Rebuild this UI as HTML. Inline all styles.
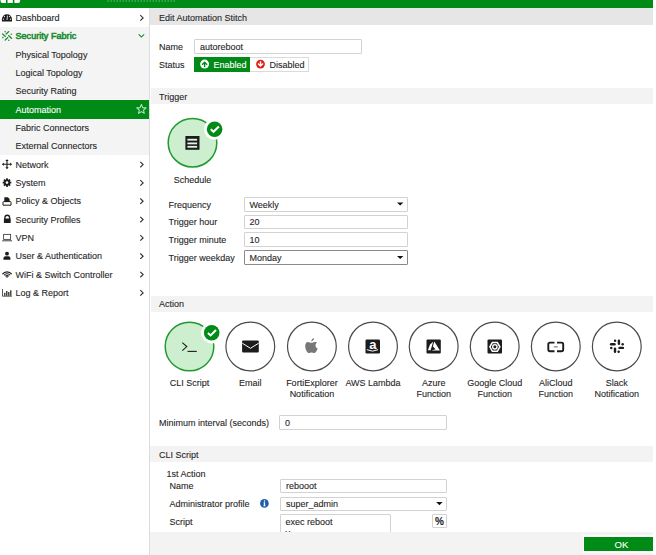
<!DOCTYPE html>
<html><head><meta charset="utf-8"><style>
*{box-sizing:border-box;margin:0;padding:0}
html,body{width:656px;height:555px;overflow:hidden;background:#fff}
body{font-family:"Liberation Sans",sans-serif;font-size:9px;color:#262626;position:relative;-webkit-text-stroke:0.1px currentColor}
.a{position:absolute;white-space:nowrap;line-height:11px}
.b{position:absolute}
.inp{position:absolute;border:1px solid #d2d2d2;border-radius:1px;background:#fff}
.inp span{position:absolute;left:5px;top:1.5px;line-height:11px;white-space:nowrap}
.cap{position:absolute;width:70px;text-align:center;line-height:11px;white-space:nowrap}
svg{position:absolute;left:0;top:0}
</style></head><body>
<div class="b" style="left:0;top:0;width:653px;height:8px;background:#008a16"></div>
<div class="b" style="left:0;top:26.6px;width:149px;height:128.1px;background:#f4f4f4"></div>
<div class="b" style="left:0;top:99px;width:149px;height:20px;background:#fff"></div>
<div class="b" style="left:0;top:100px;width:149px;height:18.6px;background:#008a16"></div>
<div class="b" style="left:149px;top:8px;width:1px;height:547px;background:#dcdcdc"></div>
<div class="a" style="left:15.5px;top:13.00px;">Dashboard</div>
<div class="a" style="left:15.5px;top:31.33px;color:#1c8c33;-webkit-text-stroke:0.6px #1c8c33;letter-spacing:0.05px;">Security Fabric</div>
<div class="a" style="left:15.5px;top:49.67px;">Physical Topology</div>
<div class="a" style="left:15.5px;top:68.00px;">Logical Topology</div>
<div class="a" style="left:15.5px;top:86.33px;">Security Rating</div>
<div class="a" style="left:15.5px;top:104.67px;color:#fff;">Automation</div>
<div class="a" style="left:15.5px;top:123.00px;">Fabric Connectors</div>
<div class="a" style="left:15.5px;top:141.33px;">External Connectors</div>
<div class="a" style="left:15.5px;top:159.67px;">Network</div>
<div class="a" style="left:15.5px;top:178.00px;">System</div>
<div class="a" style="left:15.5px;top:196.33px;">Policy &amp; Objects</div>
<div class="a" style="left:15.5px;top:214.67px;">Security Profiles</div>
<div class="a" style="left:15.5px;top:233.00px;">VPN</div>
<div class="a" style="left:15.5px;top:251.33px;">User &amp; Authentication</div>
<div class="a" style="left:15.5px;top:269.67px;">WiFi &amp; Switch Controller</div>
<div class="a" style="left:15.5px;top:288.00px;">Log &amp; Report</div>
<div class="b" style="left:150px;top:8px;width:503px;height:16.5px;background:#e6e6e6"></div>
<div class="a" style="left:159px;top:12.6px">Edit Automation Stitch</div>
<div class="a" style="left:159px;top:41.5px">Name</div>
<div class="inp" style="left:194px;top:39px;width:167.5px;height:14.5px"><span>autoreboot</span></div>
<div class="a" style="left:159px;top:59.5px">Status</div>
<div class="b" style="left:194px;top:57px;width:56px;height:14.5px;background:#008a16"></div>
<div class="b" style="left:250px;top:57px;width:58.5px;height:14.5px;border:1px solid #dadada;border-left:none;background:#fff"></div>
<div class="a" style="left:213.5px;top:59.5px;color:#fff">Enabled</div>
<div class="a" style="left:269.5px;top:59.5px">Disabled</div>
<div class="b" style="left:150.5px;top:88px;width:502.5px;height:16px;background:#f3f3f3"></div>
<div class="a" style="left:159px;top:92px">Trigger</div>
<div class="cap" style="left:157.5px;top:174.5px">Schedule</div>
<div class="a" style="left:168.5px;top:199.5px">Frequency</div>
<div class="a" style="left:168.5px;top:217px">Trigger hour</div>
<div class="a" style="left:168.5px;top:235px">Trigger minute</div>
<div class="a" style="left:168.5px;top:252.5px">Trigger weekday</div>
<div class="inp" style="left:243.5px;top:197px;width:164px;height:14.5px"><span>Weekly</span></div>
<div class="inp" style="left:243.5px;top:214.5px;width:164px;height:14.5px"><span>20</span></div>
<div class="inp" style="left:243.5px;top:232.3px;width:164px;height:14.5px"><span>10</span></div>
<div class="inp" style="left:243.5px;top:250px;width:164px;height:14.7px;border-color:#8a8a8a"><span>Monday</span></div>
<div class="b" style="left:150.5px;top:295.5px;width:502.5px;height:16px;background:#f3f3f3"></div>
<div class="a" style="left:159px;top:298.6px">Action</div>
<div class="cap" style="left:154.5px;top:377.5px">CLI Script</div>
<div class="cap" style="left:215.3px;top:377.5px">Email</div>
<div class="cap" style="left:276.9px;top:377.5px">FortiExplorer<br>Notification</div>
<div class="cap" style="left:338.0px;top:377.5px">AWS Lambda</div>
<div class="cap" style="left:398.7px;top:377.5px">Azure<br>Function</div>
<div class="cap" style="left:459.7px;top:377.5px">Google Cloud<br>Function</div>
<div class="cap" style="left:520.8px;top:377.5px">AliCloud<br>Function</div>
<div class="cap" style="left:581.8px;top:377.5px">Slack<br>Notification</div>
<div class="a" style="left:159px;top:417.5px">Minimum interval (seconds)</div>
<div class="inp" style="left:279px;top:415.3px;width:167.5px;height:14.5px"><span>0</span></div>
<div class="b" style="left:150px;top:446px;width:503px;height:16px;background:#f3f3f3"></div>
<div class="a" style="left:159px;top:450px">CLI Script</div>
<div class="a" style="left:166.5px;top:468.5px">1st Action</div>
<div class="a" style="left:169.5px;top:481px">Name</div>
<div class="a" style="left:169.5px;top:498.5px">Administrator profile</div>
<div class="a" style="left:169.5px;top:516.5px">Script</div>
<div class="inp" style="left:280px;top:478.6px;width:166.7px;height:14.6px"><span>rebooot</span></div>
<div class="inp" style="left:280px;top:496.6px;width:166.7px;height:14px"><span>super_admin</span></div>
<div class="inp" style="left:280px;top:514.2px;width:110.8px;height:30px"><span style="left:4.5px">exec reboot<br>y</span></div>
<div class="inp" style="left:432.2px;top:514.2px;width:14.5px;height:14.3px"></div>
<div class="a" style="left:435px;top:515.5px;font-weight:bold;font-size:10px">%</div>
<div class="b" style="left:150px;top:531.5px;width:503px;height:23.5px;background:#f3f3f3"></div>
<div class="b" style="left:582.7px;top:534.7px;width:70.3px;height:18.3px;background:#fff"></div>
<div class="b" style="left:584px;top:536.5px;width:69px;height:14.5px;background:#008a16"></div>
<div class="a" style="left:614.6px;top:538.6px;color:#fff;font-size:9.6px">OK</div>
<svg width="656" height="555" viewBox="0 0 656 555">
<path d="M0.5,0 H6 V3 H2.5 Q0.5,3 0.5,1 Z" fill="#fff"/>
<rect x="7.5" y="0" width="5.3" height="3" fill="#fff"/>
<path d="M14.4,0 H20.1 V1 Q20.1,3 18.1,3 H14.4 Z" fill="#fff"/>
<rect x="107.5" y="0" width="1.5" height="2" fill="#fff" fill-opacity="0.22"/>
<rect x="110.5" y="0" width="1.5" height="2" fill="#fff" fill-opacity="0.22"/>
<rect x="113.5" y="0" width="1.5" height="2" fill="#fff" fill-opacity="0.22"/>
<rect x="116.5" y="0" width="1.5" height="2" fill="#fff" fill-opacity="0.22"/>
<rect x="119.5" y="0" width="1.5" height="2" fill="#fff" fill-opacity="0.22"/>
<rect x="122.5" y="0" width="1.5" height="2" fill="#fff" fill-opacity="0.22"/>
<rect x="125.5" y="0" width="1.5" height="2" fill="#fff" fill-opacity="0.22"/>
<rect x="128.5" y="0" width="1.5" height="2" fill="#fff" fill-opacity="0.22"/>
<rect x="131.5" y="0" width="1.5" height="2" fill="#fff" fill-opacity="0.22"/>
<rect x="134.5" y="0" width="1.5" height="2" fill="#fff" fill-opacity="0.22"/>
<rect x="137.5" y="0" width="1.5" height="2" fill="#fff" fill-opacity="0.22"/>
<rect x="140.5" y="0" width="1.5" height="2" fill="#fff" fill-opacity="0.22"/>
<rect x="143.5" y="0" width="1.5" height="2" fill="#fff" fill-opacity="0.22"/>
<rect x="146.5" y="0" width="1.5" height="2" fill="#fff" fill-opacity="0.22"/>
<rect x="149.5" y="0" width="1.5" height="2" fill="#fff" fill-opacity="0.22"/>
<rect x="152.5" y="0" width="1.5" height="2" fill="#fff" fill-opacity="0.22"/>
<rect x="155.5" y="0" width="1.5" height="2" fill="#fff" fill-opacity="0.22"/>
<rect x="158.5" y="0" width="1.5" height="2" fill="#fff" fill-opacity="0.22"/>
<rect x="161.5" y="0" width="1.5" height="2" fill="#fff" fill-opacity="0.22"/>
<rect x="164.5" y="0" width="1.5" height="2" fill="#fff" fill-opacity="0.22"/>
<rect x="167.5" y="0" width="1.5" height="2" fill="#fff" fill-opacity="0.22"/>
<rect x="170.5" y="0" width="1.5" height="2" fill="#fff" fill-opacity="0.22"/>
<rect x="173.5" y="0" width="1.5" height="2" fill="#fff" fill-opacity="0.22"/>
<path d="M1.9,21.6 L1.9,19.3 A5.05,5.05 0 0 1 12,19.3 L12,21.6 Z" fill="#1c1c1c"/>
<circle cx="4.4" cy="16.6" r="0.6" fill="#fff"/>
<circle cx="3.5" cy="19.2" r="0.6" fill="#fff"/>
<circle cx="9.5" cy="16.6" r="0.6" fill="#fff"/>
<circle cx="10.4" cy="19.2" r="0.6" fill="#fff"/>
<path d="M7.5,15.6 L6.95,20" stroke="#fff" stroke-width="0.8"/>
<path d="M6.2,34 L8.8,31.6" stroke="#1f8f35" stroke-width="1.3" stroke-linecap="round"/>
<path d="M2.6,34 L5.4,36.4" stroke="#1f8f35" stroke-width="1.3" stroke-linecap="round"/>
<path d="M8.6,35.6 L11.6,38.4" stroke="#1f8f35" stroke-width="1.3" stroke-linecap="round"/>
<path d="M5.2,40 L7.8,37.6" stroke="#1f8f35" stroke-width="1.3" stroke-linecap="round"/>
<circle cx="5.2" cy="31.7" r="0.8" fill="#1f8f35"/>
<circle cx="11.3" cy="34.2" r="0.8" fill="#1f8f35"/>
<circle cx="2.9" cy="37.6" r="0.8" fill="#1f8f35"/>
<circle cx="8.8" cy="40.3" r="0.8" fill="#1f8f35"/>
<path d="M140.3,15.20 L143.1,17.90 L140.3,20.60" fill="none" stroke="#333" stroke-width="1.15"/>
<path d="M140.3,161.87 L143.1,164.57 L140.3,167.27" fill="none" stroke="#333" stroke-width="1.15"/>
<path d="M140.3,180.20 L143.1,182.90 L140.3,185.60" fill="none" stroke="#333" stroke-width="1.15"/>
<path d="M140.3,198.53 L143.1,201.23 L140.3,203.93" fill="none" stroke="#333" stroke-width="1.15"/>
<path d="M140.3,216.87 L143.1,219.57 L140.3,222.27" fill="none" stroke="#333" stroke-width="1.15"/>
<path d="M140.3,235.20 L143.1,237.90 L140.3,240.60" fill="none" stroke="#333" stroke-width="1.15"/>
<path d="M140.3,253.53 L143.1,256.23 L140.3,258.93" fill="none" stroke="#333" stroke-width="1.15"/>
<path d="M140.3,271.87 L143.1,274.57 L140.3,277.27" fill="none" stroke="#333" stroke-width="1.15"/>
<path d="M140.3,290.20 L143.1,292.90 L140.3,295.60" fill="none" stroke="#333" stroke-width="1.15"/>
<path d="M138.6,34.3 L141.4,37 L144.2,34.3" fill="none" stroke="#1f8f35" stroke-width="1.1"/>
<polygon points="141.40,104.50 142.69,107.62 146.06,107.89 143.49,110.08 144.28,113.36 141.40,111.60 138.52,113.36 139.31,110.08 136.74,107.89 140.11,107.62" fill="none" stroke="#fff" stroke-opacity="0.75" stroke-width="1.05" stroke-linejoin="round"/>
<path d="M2.8,164.2 H11.2 M7,159.9 V168.5" stroke="#1c1c1c" stroke-width="1.1"/>
<path d="M2,164.2 L3.8,162.5 V165.9 Z M12,164.2 L10.2,162.5 V165.9 Z M7,159.3 L5.3,161.1 H8.7 Z M7,169.1 L5.3,167.3 H8.7 Z" fill="#1c1c1c"/>
<rect x="6.1" y="178.3" width="1.8" height="2" fill="#1c1c1c" transform="rotate(0 7 182.6)"/>
<rect x="6.1" y="178.3" width="1.8" height="2" fill="#1c1c1c" transform="rotate(45 7 182.6)"/>
<rect x="6.1" y="178.3" width="1.8" height="2" fill="#1c1c1c" transform="rotate(90 7 182.6)"/>
<rect x="6.1" y="178.3" width="1.8" height="2" fill="#1c1c1c" transform="rotate(135 7 182.6)"/>
<rect x="6.1" y="178.3" width="1.8" height="2" fill="#1c1c1c" transform="rotate(180 7 182.6)"/>
<rect x="6.1" y="178.3" width="1.8" height="2" fill="#1c1c1c" transform="rotate(225 7 182.6)"/>
<rect x="6.1" y="178.3" width="1.8" height="2" fill="#1c1c1c" transform="rotate(270 7 182.6)"/>
<rect x="6.1" y="178.3" width="1.8" height="2" fill="#1c1c1c" transform="rotate(315 7 182.6)"/>
<circle cx="7" cy="182.6" r="3.1" fill="#1c1c1c"/><circle cx="7" cy="182.6" r="1.3" fill="#fff"/>
<path d="M4.3,197.3 H7.8 L9.6,199.1 V202 H4.3 Z" fill="#1c1c1c"/>
<path d="M3,202.2 Q3,201.6 3.6,201.6 H10.4 Q11,201.6 11,202.2 V205.2 H3 Z" fill="none" stroke="#1c1c1c" stroke-width="1"/>
<path d="M4.9,219 V217.6 A2.35,2.35 0 0 1 9.6,217.6 V219" fill="none" stroke="#1c1c1c" stroke-width="1.3"/>
<rect x="3.9" y="218.6" width="6.8" height="4.3" rx="0.5" fill="#1c1c1c"/>
<rect x="3.6" y="234.4" width="7" height="5" fill="none" stroke="#444" stroke-width="0.9"/>
<path d="M2.2,240.8 H12.1" stroke="#444" stroke-width="1"/>
<circle cx="7" cy="253.6" r="1.95" fill="#1c1c1c"/>
<path d="M3.5,259.7 V258.3 Q3.5,256.3 5.6,256.3 H8.4 Q10.4,256.3 10.4,258.3 V259.7 Z" fill="#1c1c1c"/>
<path d="M5.45,276.40 A2.0,2.0 0 0 1 8.65,276.40" fill="none" stroke="#1c1c1c" stroke-width="1.15"/>
<path d="M3.93,275.26 A3.9,3.9 0 0 1 10.17,275.26" fill="none" stroke="#1c1c1c" stroke-width="1.15"/>
<path d="M2.41,274.12 A5.8,5.8 0 0 1 11.69,274.12" fill="none" stroke="#1c1c1c" stroke-width="1.15"/>
<circle cx="7.05" cy="277" r="0.8" fill="#1c1c1c"/>
<path d="M2.5,289 V296.2 H11.9" fill="none" stroke="#444" stroke-width="0.9"/>
<rect x="4.2" y="292.8" width="1.2" height="3.0" fill="#1c1c1c"/>
<rect x="6.2" y="291" width="1.2" height="4.8" fill="#1c1c1c"/>
<rect x="8.2" y="292" width="1.2" height="3.8" fill="#1c1c1c"/>
<rect x="10.2" y="290.3" width="1.2" height="5.5" fill="#1c1c1c"/>
<circle cx="204.6" cy="64.1" r="4.5" fill="#fff"/>
<path d="M202.1,64.7 L204.6,62.2 L207.1,64.7 M204.6,62.8 V67" fill="none" stroke="#008a16" stroke-width="1.4"/>
<circle cx="260.5" cy="64.1" r="4.4" fill="#e21d14"/>
<path d="M258,63.6 L260.5,66.1 L263,63.6 M260.5,61.2 V65.6" fill="none" stroke="#fff" stroke-width="1.4"/>
<circle cx="192.5" cy="142.7" r="24.3" fill="#cdeecf" stroke="#1f9a30" stroke-width="1.5"/>
<circle cx="214.6" cy="129.2" r="10.6" fill="#fff"/><circle cx="214.6" cy="129.2" r="7.8" fill="#008a16"/><path d="M210.8,129.3 L213.5,131.8 L218.9,126.4" fill="none" stroke="#fff" stroke-width="2.1"/>
<rect x="185.4" y="136" width="14.1" height="13.8" fill="#1c1c1c"/>
<rect x="187.4" y="138.8" width="9.7" height="1.8" fill="#e4f4e4"/>
<rect x="187.4" y="142.5" width="9.7" height="1.8" fill="#e4f4e4"/>
<rect x="187.4" y="145.9" width="9.7" height="1.8" fill="#e4f4e4"/>
<circle cx="189.5" cy="346.5" r="24.3" fill="#cdeecf" stroke="#1f9a30" stroke-width="1.5"/>
<circle cx="250.3" cy="346.5" r="24.4" fill="#fff" stroke="#4a4a4a" stroke-width="1.2"/>
<circle cx="311.9" cy="346.5" r="24.4" fill="#fff" stroke="#4a4a4a" stroke-width="1.2"/>
<circle cx="373" cy="346.5" r="24.4" fill="#fff" stroke="#4a4a4a" stroke-width="1.2"/>
<circle cx="433.7" cy="346.5" r="24.4" fill="#fff" stroke="#4a4a4a" stroke-width="1.2"/>
<circle cx="494.7" cy="346.5" r="24.4" fill="#fff" stroke="#4a4a4a" stroke-width="1.2"/>
<circle cx="555.8" cy="346.5" r="24.4" fill="#fff" stroke="#4a4a4a" stroke-width="1.2"/>
<circle cx="616.8" cy="346.5" r="24.4" fill="#fff" stroke="#4a4a4a" stroke-width="1.2"/>
<circle cx="211.7" cy="332.8" r="10.6" fill="#fff"/><circle cx="211.7" cy="332.8" r="7.8" fill="#008a16"/><path d="M207.9,332.9 L210.6,335.4 L216.0,330.0" fill="none" stroke="#fff" stroke-width="2.1"/>
<path d="M182.3,342.6 L186.8,346.6 L182.3,350.6" fill="none" stroke="#1c1c1c" stroke-width="1.1"/><path d="M187.5,351.4 H196.8" stroke="#1c1c1c" stroke-width="1.1"/>
<rect x="242.1" y="340.5" width="16.7" height="12.1" rx="1" fill="#1c1c1c"/><path d="M242.3,343.2 L250.45,348.3 L258.6,343.2" fill="none" stroke="#fff" stroke-width="1"/>
<path d="M311.5,342.8 C310.2,342.8 309.3,341.9 307.9,341.9 C306.2,341.9 305.2,343.6 305.2,345.9 C305.2,349.3 307.3,353 309,353 C309.9,353 310.5,352.4 311.5,352.4 C312.5,352.4 313,353 314,353 C315.5,353 316.8,350.8 317.7,348.7 C316.2,348 315.5,346.7 315.5,345.3 C315.5,344.1 316.1,343 317,342.5 C316.3,341.8 315.3,341.9 314.6,341.9 C313.3,341.9 312.6,342.8 311.5,342.8 Z M311.3,341.6 C311.3,339.9 312.5,338.4 314,338.1 C314.1,339.8 312.8,341.3 311.3,341.6 Z" fill="#777"/>
<rect x="365.5" y="339.6" width="14.5" height="13.9" rx="1.2" fill="#1c1c1c"/>
<text x="372.9" y="348.9" font-family="Liberation Sans" font-weight="bold" font-size="13" fill="#fff" text-anchor="middle">a</text>
<path d="M366.9,349.7 Q372.5,352.6 378.1,349.7" fill="none" stroke="#fff" stroke-width="1"/>
<rect x="426.5" y="339.6" width="14.3" height="13.9" rx="1" fill="#1c1c1c"/>
<path d="M427.9,350.2 L430,344.5 L433.2,341.8 L430.6,350.2 Z M434.3,341.6 L439.9,350.6 L431.3,350.6 L435.6,349.3 L432.9,346.6 Z" fill="#fff"/>
<rect x="487.5" y="339.6" width="14.5" height="13.9" rx="1" fill="#1c1c1c"/>
<polygon points="499.85,346.85 497.35,351.18 492.35,351.18 489.85,346.85 492.35,342.52 497.35,342.52" fill="none" stroke="#fff" stroke-width="1.5"/><circle cx="494.85" cy="346.85" r="2.2" fill="none" stroke="#fff" stroke-width="1.4"/>
<path d="M554.5,342.6 H550 Q548.3,342.6 548.3,344.3 V349.6 Q548.3,351.3 550,351.3 H554.5 M557,342.6 H561.5 Q563.2,342.6 563.2,344.3 V349.6 Q563.2,351.3 561.5,351.3 H557" fill="none" stroke="#1c1c1c" stroke-width="1.9"/>
<rect x="553.8" y="346.3" width="4" height="1.1" fill="#777"/>
<rect x="617.7" y="339.6" width="2.4" height="5.3" rx="1.2" fill="#1c1c1c"/>
<rect x="609.9" y="343" width="5.8" height="2.4" rx="1.2" fill="#1c1c1c"/>
<rect x="618.3" y="346.7" width="5.8" height="2.4" rx="1.2" fill="#1c1c1c"/>
<rect x="613.8" y="347.4" width="2.4" height="5.5" rx="1.2" fill="#1c1c1c"/>
<rect x="613.8" y="339.4" width="2.5" height="2.5" rx="1.25" fill="#1c1c1c"/>
<rect x="621.4" y="343" width="2.5" height="2.5" rx="1.25" fill="#1c1c1c"/>
<rect x="610" y="346.8" width="2.5" height="2.5" rx="1.25" fill="#1c1c1c"/>
<rect x="617.4" y="350.4" width="2.5" height="2.5" rx="1.25" fill="#1c1c1c"/>
<path d="M397.0,202.4 H403.4 L400.2,205.6 Z" fill="#111"/>
<path d="M397.0,255.9 H403.4 L400.2,259.1 Z" fill="#111"/>
<path d="M436.2,502.0 H442.6 L439.4,505.2 Z" fill="#111"/>
<circle cx="264.4" cy="503.4" r="4.3" fill="#1f5ea6"/><circle cx="264.5" cy="500.9" r="0.75" fill="#fff"/><path d="M263.6,502.3 H265.1 V505.4 H265.6 V506.2 H263.3 V505.4 H263.8 V503.1 H263.6 Z" fill="#fff"/>
</svg>
</body></html>
